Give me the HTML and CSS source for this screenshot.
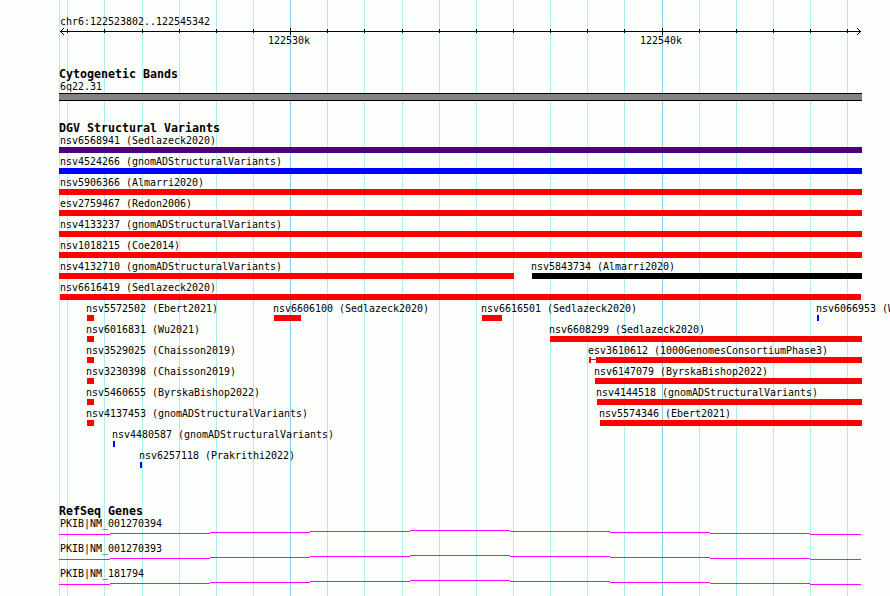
FILE: index.html
```
<!DOCTYPE html>
<html lang="en">
<head>
    <meta charset="UTF-8">
    <title>chr6:122523802..122545342</title>
    <link rel="stylesheet" href="styles.css">
</head>
<body>

<div class="browser">
    <!-- grid lines -->
    <svg class="grid" width="890" height="596" shape-rendering="crispEdges">
        <path class="minor" d="M59.5 0V596M67.5 0V596M104.5 0V596M142.5 0V596M179.5 0V596M216.5 0V596M253.5 0V596M327.5 0V596M364.5 0V596M402.5 0V596M439.5 0V596M476.5 0V596M513.5 0V596M550.5 0V596M587.5 0V596M624.5 0V596M699.5 0V596M736.5 0V596M773.5 0V596M810.5 0V596M847.5 0V596"/>
        <path class="major" d="M290.5 0V596M662.5 0V596"/>
    </svg>

    <div class="tracks">
        <!-- ruler -->
        <div class="track ruler">
            <div class="label">chr6:122523802..122545342</div>
            <svg class="axis" width="803" height="7" viewBox="59 28 803 7" shape-rendering="crispEdges">
                <path d="M60 31.5H861"/>
                <path d="M67.5 29V33M104.5 29V33M142.5 29V33M179.5 29V33M216.5 29V33M253.5 29V33M327.5 29V33M364.5 29V33M402.5 29V33M439.5 29V33M476.5 29V33M513.5 29V33M550.5 29V33M587.5 29V33M624.5 29V33M699.5 29V33M736.5 29V33M773.5 29V33M810.5 29V33M847.5 29V33"/>
                <path d="M290.5 28V35M662.5 28V35"/>
                <path d="M64 28L60.5 31.5L64 35M857 28L860.5 31.5L857 35"/>
            </svg>
            <div class="scale"><span>122530k</span><span>122540k</span></div>
        </div>

        <!-- cytobands -->
        <div class="track cytoband">
            <h2>Cytogenetic Bands</h2>
            <div class="label">6q22.31</div>
            <div class="band"></div>
        </div>

        <!-- structural variants -->
        <div class="track variants">
            <h2>DGV Structural Variants</h2>
            <div class="lane"><div class="feature full"><div class="label">nsv6568941 (Sedlazeck2020)</div><div class="bar purple"></div></div></div>
            <div class="lane"><div class="feature full"><div class="label">nsv4524266 (gnomADStructuralVariants)</div><div class="bar blue"></div></div></div>
            <div class="lane"><div class="feature full"><div class="label">nsv5906366 (Almarri2020)</div><div class="bar"></div></div></div>
            <div class="lane"><div class="feature full"><div class="label">esv2759467 (Redon2006)</div><div class="bar"></div></div></div>
            <div class="lane"><div class="feature full"><div class="label">nsv4133237 (gnomADStructuralVariants)</div><div class="bar"></div></div></div>
            <div class="lane"><div class="feature full"><div class="label">nsv1018215 (Coe2014)</div><div class="bar"></div></div></div>
            <div class="lane">
                <div class="feature full" style="width: 455px"><div class="label">nsv4132710 (gnomADStructuralVariants)</div><div class="bar"></div></div>
                <div class="feature" style="margin-left: 473px; width: 330px"><div class="label">nsv5843734 (Almarri2020)</div><div class="bar black"></div></div>
            </div>
            <div class="lane"><div class="feature edge" style="margin-left: 1px; width: 801px"><div class="label">nsv6616419 (Sedlazeck2020)</div><div class="bar"></div></div></div>
            <div class="lane">
                <div class="feature" style="margin-left: 28px; width: 7px"><div class="label">nsv5572502 (Ebert2021)</div><div class="bar"></div></div>
                <div class="feature" style="margin-left: 215px; width: 27px"><div class="label">nsv6606100 (Sedlazeck2020)</div><div class="bar"></div></div>
                <div class="feature" style="margin-left: 423px; width: 20px"><div class="label">nsv6616501 (Sedlazeck2020)</div><div class="bar"></div></div>
                <div class="feature" style="margin-left: 758px; width: 2px"><div class="label">nsv6066953 (Wu2021)</div><div class="bar blue"></div></div>
            </div>
            <div class="lane">
                <div class="feature" style="margin-left: 28px; width: 7px"><div class="label">nsv6016831 (Wu2021)</div><div class="bar"></div></div>
                <div class="feature" style="margin-left: 491px; width: 312px"><div class="label">nsv6608299 (Sedlazeck2020)</div><div class="bar"></div></div>
            </div>
            <div class="lane">
                <div class="feature" style="margin-left: 28px; width: 7px"><div class="label">nsv3529025 (Chaisson2019)</div><div class="bar"></div></div>
                <div class="feature" style="margin-left: 530px; width: 273px">
                    <div class="label">esv3610612 (1000GenomesConsortiumPhase3)</div>
                    <div class="split"><span class="cap"></span><span class="whisker"></span><span class="bar"></span></div>
                </div>
            </div>
            <div class="lane">
                <div class="feature" style="margin-left: 28px; width: 7px"><div class="label">nsv3230398 (Chaisson2019)</div><div class="bar"></div></div>
                <div class="feature" style="margin-left: 536px; width: 267px"><div class="label">nsv6147079 (ByrskaBishop2022)</div><div class="bar"></div></div>
            </div>
            <div class="lane">
                <div class="feature" style="margin-left: 28px; width: 7px"><div class="label">nsv5460655 (ByrskaBishop2022)</div><div class="bar"></div></div>
                <div class="feature" style="margin-left: 538px; width: 265px"><div class="label">nsv4144518 (gnomADStructuralVariants)</div><div class="bar"></div></div>
            </div>
            <div class="lane">
                <div class="feature" style="margin-left: 28px; width: 7px"><div class="label">nsv4137453 (gnomADStructuralVariants)</div><div class="bar"></div></div>
                <div class="feature" style="margin-left: 541px; width: 262px"><div class="label">nsv5574346 (Ebert2021)</div><div class="bar"></div></div>
            </div>
            <div class="lane"><div class="feature" style="margin-left: 54px; width: 2px"><div class="label">nsv4480587 (gnomADStructuralVariants)</div><div class="bar blue"></div></div></div>
            <div class="lane"><div class="feature" style="margin-left: 81px; width: 2px"><div class="label">nsv6257118 (Prakrithi2022)</div><div class="bar blue"></div></div></div>
        </div>

        <!-- genes -->
        <div class="track genes">
            <h2>RefSeq Genes</h2>
            <div class="gene">
                <div class="label">PKIB|NM_001270394</div>
                <svg class="intron" width="803" height="5" viewBox="59 0 803 5" shape-rendering="crispEdges"><path d="M59 4.5H110M110 3.5H210M210 2.5H310M310 1.5H410M410 .5H510M510 1.5H610M610 2.5H710M710 3.5H810M810 4.5H861"/></svg>
            </div>
            <div class="gene">
                <div class="label">PKIB|NM_001270393</div>
                <svg class="intron" width="803" height="5" viewBox="59 0 803 5" shape-rendering="crispEdges"><path d="M59 4.5H110M110 3.5H210M210 2.5H310M310 1.5H410M410 .5H510M510 1.5H610M610 2.5H710M710 3.5H810M810 4.5H861"/></svg>
            </div>
            <div class="gene">
                <div class="label">PKIB|NM_181794</div>
                <svg class="intron" width="803" height="5" viewBox="59 0 803 5" shape-rendering="crispEdges"><path d="M59 4.5H110M110 3.5H210M210 2.5H310M310 1.5H410M410 .5H510M510 1.5H610M610 2.5H710M710 3.5H810M810 4.5H861"/></svg>
            </div>
        </div>
    </div>
</div>

</body>
</html>
```
FILE: styles.css
```
body {
    margin: 0;
    background: #fcfefc;
    color: #000;
    font-family: "DejaVu Sans Mono", "Liberation Mono", monospace;
    font-size: 9.97px;
    line-height: 12px;
}

svg {
    display: block;
    fill: none;
}

/* grid lines and tracks share one cell */
.browser {
    display: grid;
    width: 890px;
    height: 596px;
    overflow: hidden;
}

.grid, .tracks {
    grid-area: 1 / 1;
}

.minor {
    stroke: #afeeee;
}

.major {
    stroke: #87ceeb;
}

.tracks {
    padding: 16px 0 0 59px;
}

.track {
    width: 803px;
}

h2 {
    margin: 0;
    font-size: 11.63px;
    line-height: 14px;
    font-weight: bold;
    white-space: nowrap;
}

.label {
    height: 12px;
    margin-left: 1px;
    white-space: nowrap;
}

/* ruler */
.axis {
    stroke: #000;
}

.scale {
    display: flex;
    gap: 330px;
    padding-left: 209px;
}

.scale span {
    width: 42px;
}

/* cytobands */
.cytoband {
    margin-top: 20px;
}

.band {
    height: 6px;
    background: #848284;
    border-top: 1px solid #000;
    border-bottom: 1px solid #000;
}

/* variants */
.variants {
    margin-top: 20px;
}

.lane {
    display: grid;
    height: 21px;
}

.feature {
    grid-area: 1 / 1;
}

.feature .label {
    width: 0;
    margin: 0 0 0 -1px;
}

.feature.full .label {
    margin-left: 1px;
}

.feature.edge .label {
    margin-left: 0;
}

.bar {
    height: 6px;
    background: #ff0000;
}

.purple {
    background: #4b0082;
}

.blue {
    background: #0000ff;
}

.black {
    background: #000;
}

.split {
    display: flex;
    height: 6px;
}

.split .cap {
    width: 2px;
    background: #ff0000;
}

.split .whisker {
    width: 5px;
    height: 1px;
    margin-top: 2px;
    background: #ff0000;
}

.split .bar {
    flex: 1;
}

/* genes */
.genes {
    margin-top: 33px;
}

.gene {
    height: 25px;
}

.intron {
    stroke: #ff00ff;
}
```
